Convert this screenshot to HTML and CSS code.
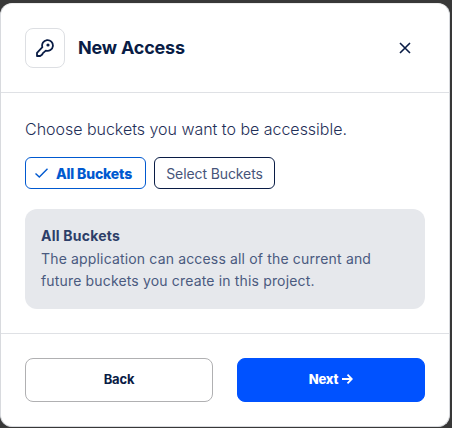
FILE: index.html
```html
<!DOCTYPE html>
<html lang="en">
<head>
<meta charset="utf-8">
<title>New Access</title>
<link rel="stylesheet" href="styles.css">
</head>
<body>
<main class="dialog">
  <header class="header">
    <span class="badge">
      <svg width="18" height="18" viewBox="0 0 18 18" fill="none" stroke="currentColor" stroke-width="1.8" stroke-linejoin="round">
        <path d="M6.4 8.2A5.4 5.4 0 1 1 9.8 11.6L6.7 14.4L6.2 15.6L4.2 17H1V13.8Z"/>
        <circle cx="12" cy="6" r="1.6" fill="currentColor" stroke="none"/>
      </svg>
    </span>
    <h1 class="title">New Access</h1>
    <button class="close" aria-label="Close">
      <svg width="12" height="12" viewBox="0 0 12 12" fill="none" stroke="currentColor" stroke-width="1.6"><path d="M1 1L11 11M11 1L1 11"/></svg>
    </button>
  </header>
  <section class="content">
    <p class="prompt">Choose buckets you want to be accessible.</p>
    <div class="chips">
      <button class="chip chip-selected">
        <svg width="13" height="10" viewBox="0 0 13 10" fill="none" stroke="currentColor" stroke-width="1.4"><path d="M.5 5.4L4.3 9L12.5.7"/></svg>
        <span>All Buckets</span>
      </button>
      <button class="chip"><span>Select Buckets</span></button>
    </div>
    <div class="info">
      <h2 class="info-title">All Buckets</h2>
      <p class="info-text">The application can access all of the current and future buckets you create in this project.</p>
    </div>
  </section>
  <footer class="footer">
    <button class="action">Back</button>
    <button class="action action-primary">Next
      <svg width="11" height="10" viewBox="0 0 11 10" fill="none" stroke="currentColor" stroke-width="1.8"><path d="M0 5H9.6M5.5.7L9.8 5L5.5 9.3"/></svg>
    </button>
  </footer>
</main>
</body>
</html>
```
FILE: styles.css
```css
* { box-sizing: border-box; }
body { margin: 0; padding-top: 3px; height: 428px; overflow: hidden; background: #383838; font-family: Inter, "Liberation Sans", sans-serif; color: #091c45; }
h1, h2, p { margin: 0; }
button { font: inherit; color: inherit; padding: 0; margin: 0; background: none; }
svg { display: block; flex: none; }
.dialog { width: 450px; height: 424px; background: #fff; border: 1px solid #d8dade; border-top-color: #eee; border-radius: 12px; display: flex; flex-direction: column; }
.header { height: 89px; border-bottom: 1px solid #dfe1e5; padding: 0 38px 0 24px; display: flex; align-items: center; }
.badge { width: 40px; height: 40px; border: 1px solid #dddfe3; border-radius: 8px; display: flex; align-items: center; justify-content: center; }
.title { margin-left: 13px; font-size: 18px; line-height: 24px; font-weight: 700; letter-spacing: -.2px; }
.close { border: 0; margin-left: auto; }
.content { height: 241px; padding: 24px 24px 0; border-bottom: 1px solid #dfe1e5; }
.prompt { font-size: 16px; line-height: 24px; font-weight: 300; letter-spacing: -.02px; color: #1f2f58; }
.chips { display: flex; gap: 8px; margin-top: 16px; }
.chip { width: 121px; height: 32px; border: 1px solid #091c45; border-radius: 6px; display: flex; align-items: center; justify-content: center; font-size: 14px; line-height: 20px; letter-spacing: -.1px; color: #47557a; white-space: nowrap; }
.chip span { padding-top: 2px; }
.chip-selected { border-color: #0059d0; color: #0059d0; font-weight: 800; letter-spacing: -.17px; gap: 8px; padding-right: 4px; }
.info { height: 100px; margin-top: 20px; padding: 16px; border-radius: 12px; background: #e6e8ec; color: #2d3e68; font-size: 14px; line-height: 22px; letter-spacing: .16px; }
.info-title { font-size: 14px; line-height: 22.5px; font-weight: 700; letter-spacing: .23px; }
.info-text { color: #4a5a7f; padding-top: .5px; }
.footer { padding: 24px; display: flex; gap: 24px; }
.action { flex: 1; height: 44px; border: 1px solid #b0b0b2; border-radius: 8px; display: flex; align-items: center; justify-content: center; gap: 4px; font-size: 13px; font-weight: 700; letter-spacing: -.15px; padding-bottom: 2px; }
.action-primary { border-color: #0052ff; background: #0052ff; color: #fff; font-weight: 800; letter-spacing: -.25px; }
```
